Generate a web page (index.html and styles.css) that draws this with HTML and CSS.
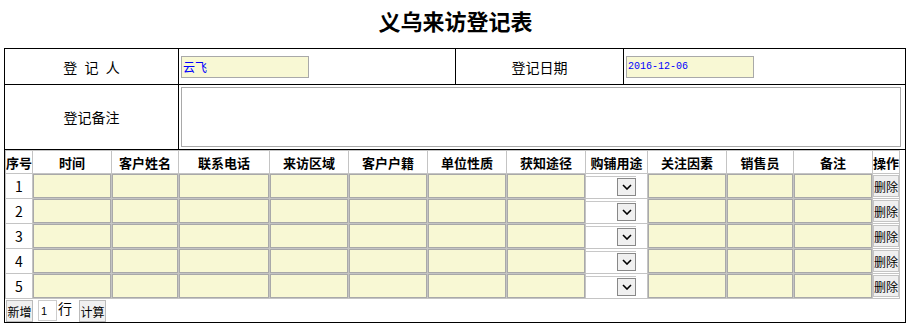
FILE: index.html
```html
<!DOCTYPE html>
<html lang="zh-CN">

<head>
    <meta charset="UTF-8">
    <title>义乌来访登记表</title>
    <link rel="stylesheet" href="styles.css">
</head>

<body>
    <h1 class="title">义乌来访登记表</h1>

    <table class="sheet">
        <colgroup>
            <col class="c1">
            <col class="c2">
            <col class="c3">
            <col class="c4">
        </colgroup>
        <tr class="row-head">
            <td class="label"><span class="spaced">登 记 人</span></td>
            <td class="field"><input class="txt" type="text" value="云飞"></td>
            <td class="label">登记日期</td>
            <td class="field"><input class="txt date" type="text" value="2016-12-06"></td>
        </tr>
        <tr class="row-note">
            <td class="label">登记备注</td>
            <td class="field" colspan="3"><textarea class="note"></textarea></td>
        </tr>
        <tr>
            <td class="grid-cell" colspan="4">
                <table class="grid">
                    <colgroup>
                        <col style="width: 27px">
                        <col style="width: 79px">
                        <col style="width: 67px">
                        <col style="width: 91px">
                        <col style="width: 79px">
                        <col style="width: 79px">
                        <col style="width: 79px">
                        <col style="width: 79px">
                        <col style="width: 62px">
                        <col style="width: 79px">
                        <col style="width: 67px">
                        <col style="width: 79px">
                        <col style="width: 27px">
                    </colgroup>
                    <thead>
                        <tr>
                            <th>序号</th>
                            <th>时间</th>
                            <th>客户姓名</th>
                            <th>联系电话</th>
                            <th>来访区域</th>
                            <th>客户户籍</th>
                            <th>单位性质</th>
                            <th>获知途径</th>
                            <th>购铺用途</th>
                            <th>关注因素</th>
                            <th>销售员</th>
                            <th>备注</th>
                            <th>操作</th>
                        </tr>
                    </thead>
                    <tbody>
                        <tr>
                            <td class="num">1</td>
                            <td><input class="cell-in" type="text"></td>
                            <td><input class="cell-in" type="text"></td>
                            <td><input class="cell-in" type="text"></td>
                            <td><input class="cell-in" type="text"></td>
                            <td><input class="cell-in" type="text"></td>
                            <td><input class="cell-in" type="text"></td>
                            <td><input class="cell-in" type="text"></td>
                            <td><div class="pick"><select></select><span class="arrow"><svg width="10" height="6" viewBox="0 0 10 6"><path d="M1 1 L5 5 L9 1" fill="none" stroke="#000" stroke-width="1.6"/></svg></span></div></td>
                            <td><input class="cell-in" type="text"></td>
                            <td><input class="cell-in" type="text"></td>
                            <td><input class="cell-in" type="text"></td>
                            <td><button class="del">删除</button></td>
                        </tr>
                        <tr>
                            <td class="num">2</td>
                            <td><input class="cell-in" type="text"></td>
                            <td><input class="cell-in" type="text"></td>
                            <td><input class="cell-in" type="text"></td>
                            <td><input class="cell-in" type="text"></td>
                            <td><input class="cell-in" type="text"></td>
                            <td><input class="cell-in" type="text"></td>
                            <td><input class="cell-in" type="text"></td>
                            <td><div class="pick"><select></select><span class="arrow"><svg width="10" height="6" viewBox="0 0 10 6"><path d="M1 1 L5 5 L9 1" fill="none" stroke="#000" stroke-width="1.6"/></svg></span></div></td>
                            <td><input class="cell-in" type="text"></td>
                            <td><input class="cell-in" type="text"></td>
                            <td><input class="cell-in" type="text"></td>
                            <td><button class="del">删除</button></td>
                        </tr>
                        <tr>
                            <td class="num">3</td>
                            <td><input class="cell-in" type="text"></td>
                            <td><input class="cell-in" type="text"></td>
                            <td><input class="cell-in" type="text"></td>
                            <td><input class="cell-in" type="text"></td>
                            <td><input class="cell-in" type="text"></td>
                            <td><input class="cell-in" type="text"></td>
                            <td><input class="cell-in" type="text"></td>
                            <td><div class="pick"><select></select><span class="arrow"><svg width="10" height="6" viewBox="0 0 10 6"><path d="M1 1 L5 5 L9 1" fill="none" stroke="#000" stroke-width="1.6"/></svg></span></div></td>
                            <td><input class="cell-in" type="text"></td>
                            <td><input class="cell-in" type="text"></td>
                            <td><input class="cell-in" type="text"></td>
                            <td><button class="del">删除</button></td>
                        </tr>
                        <tr>
                            <td class="num">4</td>
                            <td><input class="cell-in" type="text"></td>
                            <td><input class="cell-in" type="text"></td>
                            <td><input class="cell-in" type="text"></td>
                            <td><input class="cell-in" type="text"></td>
                            <td><input class="cell-in" type="text"></td>
                            <td><input class="cell-in" type="text"></td>
                            <td><input class="cell-in" type="text"></td>
                            <td><div class="pick"><select></select><span class="arrow"><svg width="10" height="6" viewBox="0 0 10 6"><path d="M1 1 L5 5 L9 1" fill="none" stroke="#000" stroke-width="1.6"/></svg></span></div></td>
                            <td><input class="cell-in" type="text"></td>
                            <td><input class="cell-in" type="text"></td>
                            <td><input class="cell-in" type="text"></td>
                            <td><button class="del">删除</button></td>
                        </tr>
                        <tr>
                            <td class="num">5</td>
                            <td><input class="cell-in" type="text"></td>
                            <td><input class="cell-in" type="text"></td>
                            <td><input class="cell-in" type="text"></td>
                            <td><input class="cell-in" type="text"></td>
                            <td><input class="cell-in" type="text"></td>
                            <td><input class="cell-in" type="text"></td>
                            <td><input class="cell-in" type="text"></td>
                            <td><div class="pick"><select></select><span class="arrow"><svg width="10" height="6" viewBox="0 0 10 6"><path d="M1 1 L5 5 L9 1" fill="none" stroke="#000" stroke-width="1.6"/></svg></span></div></td>
                            <td><input class="cell-in" type="text"></td>
                            <td><input class="cell-in" type="text"></td>
                            <td><input class="cell-in" type="text"></td>
                            <td><button class="del">删除</button></td>
                        </tr>
                    </tbody>
                </table>

                <div class="toolbar">
                    <button class="btn">新增</button>
                    <input class="count" type="text" value="1">
                    <span class="unit">行</span>
                    <button class="btn">计算</button>
                </div>
            </td>
        </tr>
    </table>
</body>

</html>
```

FILE: styles.css
```css
body {
    margin: 0;
    font-family: "Noto Sans CJK SC", sans-serif;
    color: #000;
    background-color: #fff;
}

.title {
    margin: 0;
    height: 48px;
    line-height: 40px;
    text-align: center;
    font-size: 22px;
    font-weight: bold;
}

.sheet {
    border-collapse: collapse;
    table-layout: fixed;
    width: 901px;
    margin-left: 4px;
}

.sheet .c1 {
    width: 174px;
}

.sheet .c2 {
    width: 277px;
}

.sheet .c3 {
    width: 168px;
}

.sheet .c4 {
    width: 282px;
}

.sheet > tbody > tr > td {
    border: 1px solid #000;
    padding: 0;
}

.sheet .label {
    text-align: center;
    font-size: 14px;
}

.spaced {
    word-spacing: 4px;
}

.row-head td {
    height: 35px;
}

.row-note td {
    height: 64px;
}

.sheet td.field {
    padding-left: 2px;
}

.txt {
    display: block;
    width: 128px;
    height: 22px;
    box-sizing: border-box;
    border: 1px solid #a9a9a9;
    background-color: #f8f8d4;
    color: #0000ff;
    font-family: inherit;
    font-size: 12px;
    padding: 0 0 0 1px;
    margin: 0;
}

.txt.date {
    font-family: "Liberation Mono", monospace;
    font-size: 10px;
}

.note {
    display: block;
    width: 720px;
    height: 60px;
    box-sizing: border-box;
    border: 1px solid #a9a9a9;
    margin: 0;
    padding: 0;
    resize: none;
}

.sheet td.grid-cell {
    vertical-align: top;
}

.grid {
    border-collapse: collapse;
    table-layout: fixed;
    width: 894px;
}

.grid th,
.grid td {
    border: 1px solid #c4c4c4;
    padding: 0;
}

.grid th {
    height: 22px;
    font-size: 13px;
    font-weight: bold;
    white-space: nowrap;
    overflow: hidden;
}

.grid td {
    height: 24px;
}

.grid .num {
    text-align: center;
    font-size: 14px;
}

.cell-in {
    display: block;
    width: 100%;
    height: 24px;
    box-sizing: border-box;
    border: 1px solid #a9a9a9;
    background-color: #f8f8d4;
    padding: 0;
    margin: 0;
}

.pick {
    display: flex;
    align-items: center;
    width: 50px;
    height: 20px;
    box-sizing: border-box;
    border-top: 1px solid #c8c8c8;
    background-color: #fff;
}

.pick select {
    appearance: none;
    -webkit-appearance: none;
    flex: 1;
    min-width: 0;
    height: 100%;
    border: none;
    background: transparent;
    padding: 0;
}

.arrow {
    display: flex;
    align-items: center;
    justify-content: center;
    width: 19px;
    height: 18px;
    box-sizing: border-box;
    border: 1px solid #888;
    background-color: #f0f0f0;
}

.del {
    display: block;
    width: 100%;
    height: 22px;
    padding: 0;
    border: 1px solid #c4c4c4;
    background-color: #f0f0f0;
    color: #000;
    font-family: inherit;
    font-size: 12px;
    white-space: nowrap;
    overflow: hidden;
}

.toolbar {
    display: flex;
    align-items: flex-start;
    height: 23px;
    padding: 1px 0 0 1px;
    box-sizing: border-box;
}

.btn {
    width: 27px;
    height: 22px;
    padding: 0;
    border: 1px solid #bbb;
    background-color: #f0f0f0;
    color: #000;
    font-family: inherit;
    font-size: 12px;
    white-space: nowrap;
}

.count {
    width: 19px;
    height: 21px;
    box-sizing: border-box;
    margin-left: 5px;
    padding: 0 0 0 2px;
    border: 1px solid #ccc;
    font-size: 11px;
}

.unit {
    font-size: 14px;
    line-height: 16px;
    margin: 0 7px 0 1px;
}
```
